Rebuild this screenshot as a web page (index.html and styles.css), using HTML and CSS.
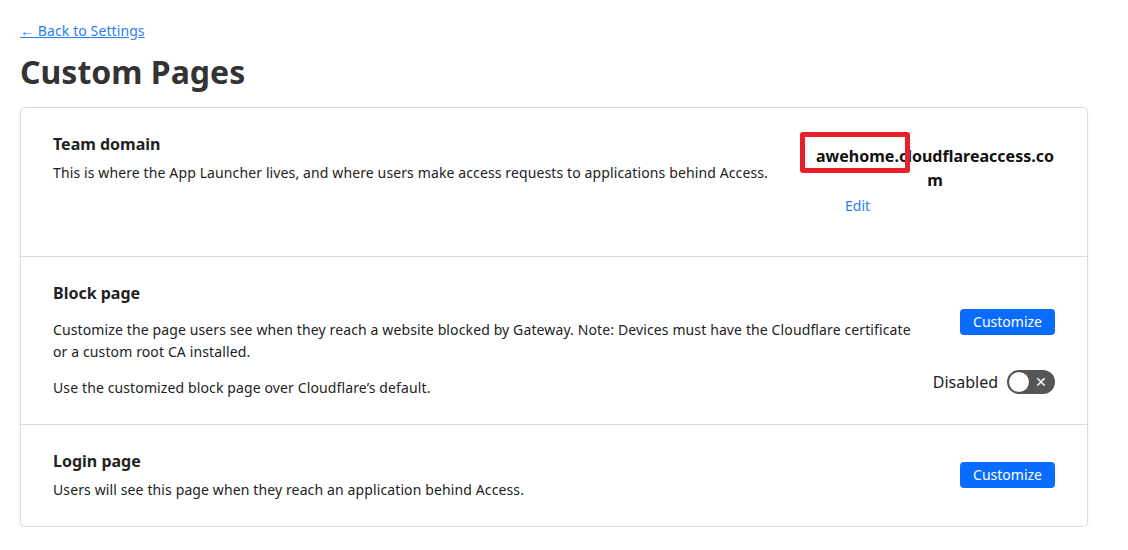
FILE: index.html
```html
<!DOCTYPE html>
<html lang="en">
<head>
<meta charset="utf-8">
<title>Custom Pages</title>
<link rel="stylesheet" href="styles.css">
</head>
<body>
<div class="page">
  <a class="back" href="#">← Back to Settings</a>
  <h1 class="title">Custom Pages</h1>
  <div class="card">
    <section class="row row-domain">
      <div class="left">
        <h2 class="row-title">Team domain</h2>
        <p class="desc">This is where the App Launcher lives, and where users make access requests to applications behind Access.</p>
      </div>
      <div class="right domain-col">
        <div class="domain">awehome.cloudflareaccess.com<span class="highlight"></span></div>
        <a class="edit" href="#">Edit</a>
      </div>
    </section>
    <section class="row row-block">
      <div class="left">
        <h2 class="row-title">Block page</h2>
        <p class="desc desc-first">Customize the page users see when they reach a website blocked by Gateway. Note: Devices must have the Cloudflare certificate or a custom root CA installed.</p>
        <p class="desc desc-second">Use the customized block page over Cloudflare’s default.</p>
      </div>
      <div class="right block-col">
        <button class="btn">Customize</button>
        <div class="toggle-row">
          <span class="toggle-label">Disabled</span>
          <span class="toggle"><span class="knob"></span><span class="x">✕</span></span>
        </div>
      </div>
    </section>
    <section class="row row-login">
      <div class="left">
        <h2 class="row-title">Login page</h2>
        <p class="desc">Users will see this page when they reach an application behind Access.</p>
      </div>
      <div class="right login-col">
        <button class="btn">Customize</button>
      </div>
    </section>
  </div>
</div>
</body>
</html>
```

FILE: styles.css
```css
html, body {
  margin: 0;
  padding: 0;
  background: #fff;
}
body {
  font-family: "Noto Sans", "Open Sans", sans-serif;
  color: #222;
  font-size: 14px;
}
.page {
  padding: 21px 40px 0 20px;
}
.back {
  display: inline-block;
  color: #2c7cf6;
  font-size: 14px;
  line-height: 20px;
  letter-spacing: 0.1px;
  text-decoration: underline;
}
.title {
  margin: 11px 0 15px;
  font-size: 32px;
  line-height: 40px;
  font-weight: 700;
  color: #333;
}
.card {
  border: 1px solid #dcdcdc;
  border-radius: 5px;
  box-shadow: 0 2px 4px rgba(0,0,0,0.04);
  background: #fff;
}
.row {
  display: flex;
  justify-content: space-between;
  padding: 24px 32px;
}
.row + .row {
  border-top: 1px solid #dcdcdc;
}
.left {
  flex: 1;
  min-width: 0;
}
.row-title {
  margin: 0;
  font-size: 16px;
  line-height: 24px;
  font-weight: 700;
  color: #222;
}
.desc {
  margin: 6px 0 0;
  line-height: 22px;
  font-size: 14px;
  letter-spacing: 0.12px;
}
.row-domain {
  padding-bottom: 38px;
}
.domain-col {
  width: 240px;
  padding-top: 12px;
  flex: none;
}
.domain {
  position: relative;
  font-size: 16px;
  font-weight: 700;
  line-height: 24px;
  text-align: center;
  word-break: break-all;
  color: #111;
}
.highlight {
  position: absolute;
  left: -15px;
  top: -12px;
  width: 100px;
  height: 31px;
  border: 5px solid #e8202a;
  border-radius: 3px;
}
.edit {
  display: block;
  margin: 2px 0 0 30px;
  color: #2c7cf6;
  text-decoration: none;
  line-height: 24px;
  font-size: 14px;
}
.desc-first {
  margin-top: 14px;
  max-width: 866px;
}
.desc-second {
  margin-top: 14px;
}
.row-block {
  padding-bottom: 25px;
}
.block-col {
  flex: none;
  display: flex;
  flex-direction: column;
  align-items: flex-end;
  padding-top: 28px;
  margin-left: 20px;
}
.btn {
  height: 26px;
  padding: 0 13px;
  border: none;
  border-radius: 4px;
  background: #0a6cff;
  color: #fff;
  font-family: inherit;
  font-size: 14px;
  line-height: 26px;
  cursor: pointer;
}
.toggle-row {
  display: flex;
  align-items: center;
  margin-top: 35px;
}
.toggle-label {
  font-size: 16px;
  line-height: 24px;
  margin-right: 9px;
}
.toggle {
  position: relative;
  display: inline-flex;
  align-items: center;
  width: 48px;
  height: 24px;
  border-radius: 12px;
  background: #555;
  box-sizing: border-box;
}
.knob {
  position: absolute;
  left: 1px;
  top: 1px;
  width: 22px;
  height: 22px;
  border-radius: 50%;
  background: #fff;
  border: 1px solid #444;
  box-sizing: border-box;
}
.x {
  position: absolute;
  right: 8px;
  top: 0;
  line-height: 24px;
  color: #fff;
  font-size: 14px;
}
.row-login {
  padding-bottom: 25px;
}
.login-col {
  flex: none;
  display: flex;
  align-items: center;
}
```
